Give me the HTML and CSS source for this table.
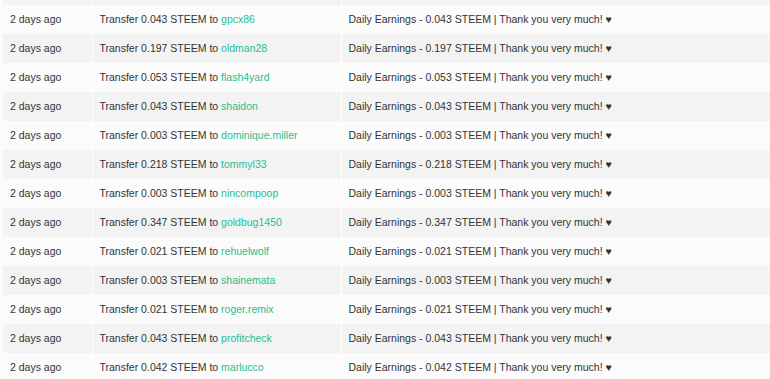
FILE: index.html
```html
<!DOCTYPE html>
<html>
<head>
<meta charset="utf-8">
<link rel="stylesheet" href="styles.css">
</head>
<body>
<div class="wrap">
<table class="tx">
<colgroup><col class="c-time"><col class="c-op"><col class="c-memo"></colgroup>
<tbody>
<tr class="partial"><td></td><td></td><td></td></tr>
<tr><td>2 days ago</td><td>Transfer 0.043 STEEM to <a href="#">gpcx86</a></td><td>Daily Earnings - 0.043 STEEM | Thank you very much! ♥</td></tr>
<tr><td>2 days ago</td><td>Transfer 0.197 STEEM to <a href="#">oldman28</a></td><td>Daily Earnings - 0.197 STEEM | Thank you very much! ♥</td></tr>
<tr><td>2 days ago</td><td>Transfer 0.053 STEEM to <a href="#">flash4yard</a></td><td>Daily Earnings - 0.053 STEEM | Thank you very much! ♥</td></tr>
<tr><td>2 days ago</td><td>Transfer 0.043 STEEM to <a href="#">shaidon</a></td><td>Daily Earnings - 0.043 STEEM | Thank you very much! ♥</td></tr>
<tr><td>2 days ago</td><td>Transfer 0.003 STEEM to <a href="#">dominique.miller</a></td><td>Daily Earnings - 0.003 STEEM | Thank you very much! ♥</td></tr>
<tr><td>2 days ago</td><td>Transfer 0.218 STEEM to <a href="#">tommyl33</a></td><td>Daily Earnings - 0.218 STEEM | Thank you very much! ♥</td></tr>
<tr><td>2 days ago</td><td>Transfer 0.003 STEEM to <a href="#">nincompoop</a></td><td>Daily Earnings - 0.003 STEEM | Thank you very much! ♥</td></tr>
<tr><td>2 days ago</td><td>Transfer 0.347 STEEM to <a href="#">goldbug1450</a></td><td>Daily Earnings - 0.347 STEEM | Thank you very much! ♥</td></tr>
<tr><td>2 days ago</td><td>Transfer 0.021 STEEM to <a href="#">rehuelwolf</a></td><td>Daily Earnings - 0.021 STEEM | Thank you very much! ♥</td></tr>
<tr><td>2 days ago</td><td>Transfer 0.003 STEEM to <a href="#">shainemata</a></td><td>Daily Earnings - 0.003 STEEM | Thank you very much! ♥</td></tr>
<tr><td>2 days ago</td><td>Transfer 0.021 STEEM to <a href="#">roger.remix</a></td><td>Daily Earnings - 0.021 STEEM | Thank you very much! ♥</td></tr>
<tr><td>2 days ago</td><td>Transfer 0.043 STEEM to <a href="#">profitcheck</a></td><td>Daily Earnings - 0.043 STEEM | Thank you very much! ♥</td></tr>
<tr><td>2 days ago</td><td>Transfer 0.042 STEEM to <a href="#">marlucco</a></td><td>Daily Earnings - 0.042 STEEM | Thank you very much! ♥</td></tr>
</tbody>
</table>
</div>
</body>
</html>
```
FILE: styles.css
```css
html, body {
  margin: 0;
  padding: 0;
  background: #fbfbfb;
  overflow: hidden;
}
.wrap {
  padding-left: 3px;
}
.tx {
  width: 767px;
  border-collapse: collapse;
  table-layout: fixed;
  font-family: "Liberation Sans", Arial, sans-serif;
  font-size: 10.5px;
  color: #333333;
}
.c-time { width: 89px; }
.c-op { width: 249px; }
.tx td {
  height: 29px;
  box-sizing: border-box;
  padding: 0 7px 2px;
  vertical-align: middle;
  white-space: nowrap;
  border-right: 1px solid #ffffff;
}
.tx .partial td { height: 5px; padding: 0; }
.tx td:last-child { border-right: none; }
.tx tr:nth-child(odd) td { background: #f3f3f3; }
.tx tr:nth-child(even) td { background: #fbfbfb; }
.tx a {
  color: #1fbf8f;
  text-decoration: none;
}
```
